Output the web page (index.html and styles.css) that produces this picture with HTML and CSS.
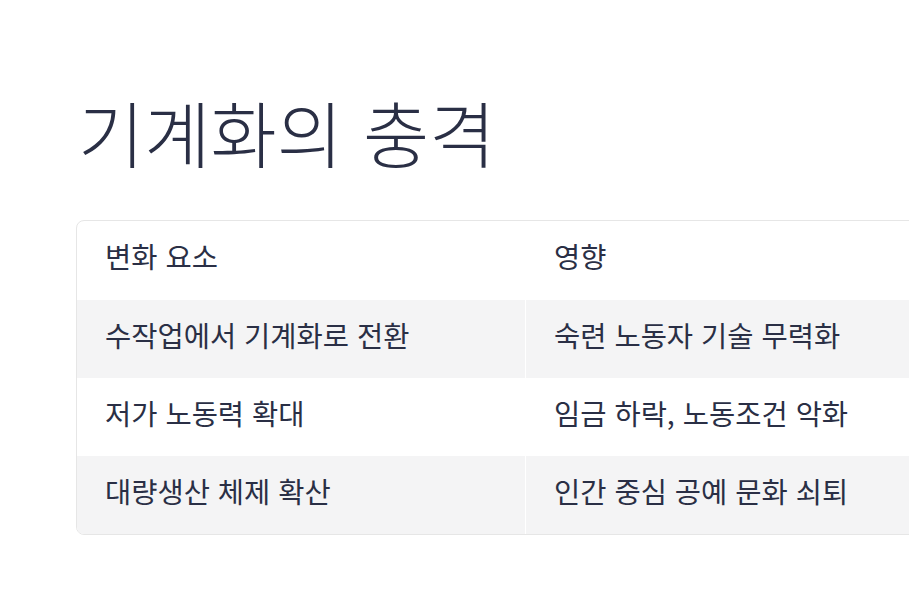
FILE: index.html
```html
<!DOCTYPE html>
<html lang="ko">
<head>
<meta charset="utf-8">
<link rel="stylesheet" href="styles.css">
</head>
<body>
<main class="slide">
  <h1 class="title">기계화의 충격</h1>
  <table class="grid">
    <thead>
      <tr><th>변화 요소</th><th>영향</th></tr>
    </thead>
    <tbody>
      <tr class="alt"><td>수작업에서 기계화로 전환</td><td>숙련 노동자 기술 무력화</td></tr>
      <tr><td>저가 노동력 확대</td><td>임금 하락, 노동조건 악화</td></tr>
      <tr class="alt"><td>대량생산 체제 확산</td><td>인간 중심 공예 문화 쇠퇴</td></tr>
    </tbody>
  </table>
</main>
</body>
</html>
```
FILE: styles.css
```css
html, body {
  margin: 0;
  padding: 0;
  overflow: hidden;
  background: #ffffff;
}
.slide {
  width: 1100px;
  padding: 81px 0 0 76px;
  font-family: "Noto Sans CJK KR", "Noto Sans", sans-serif;
  color: #2a2f45;
}
.title {
  margin: 0 0 0 2px;
  font-size: 72px;
  font-weight: 300;
  line-height: 100px;
  letter-spacing: 0;
}
.grid {
  margin-top: 39px;
  width: 898px;
  border-collapse: separate;
  border-spacing: 0;
  border: 1px solid #e6e6e6;
  border-radius: 8px;
  overflow: hidden;
  font-size: 28.5px;
  table-layout: fixed;
}
.grid th, .grid td {
  text-align: left;
  font-weight: 400;
  padding: 0 28px 10px;
  height: 68px;
  vertical-align: middle;
}
.grid th {
  height: 69px;
}
.grid td + td, .grid th + th {
  border-left: 1px solid #ffffff;
}
.grid tr.alt td {
  background: #f4f4f5;
}
```
